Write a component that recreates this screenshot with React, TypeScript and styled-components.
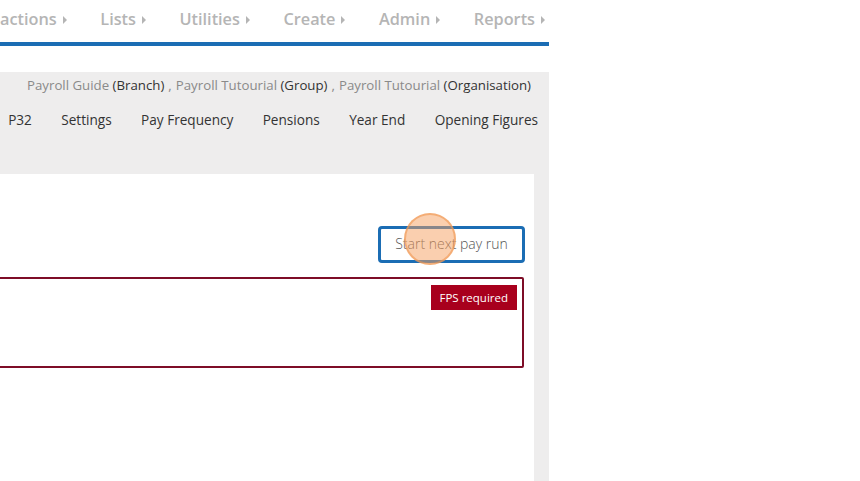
import React from "react";
import styled, { createGlobalStyle } from "styled-components";

const GlobalStyle = createGlobalStyle`
  html, body {
    margin: 0;
    padding: 0;
    background: #ffffff;
    font-family: "Open Sans", "Noto Sans", sans-serif;
  }
`;

const Page = styled.div`
  width: 549px;
  height: 481px;
  display: flex;
  flex-direction: column;
  overflow: hidden;
`;

const TopNav = styled.nav`
  height: 42px;
  display: flex;
  justify-content: flex-end;
  align-items: center;
  gap: 33.5px;
  padding-right: 4px;
  white-space: nowrap;
`;

const NavItem = styled.span`
  display: flex;
  align-items: center;
  gap: 6px;
  font-size: 16.3px;
  font-weight: 600;
  color: #b5b5b5;
  padding-bottom: 4px;
`;

const Caret = styled.span`
  width: 0;
  height: 0;
  border-top: 4px solid transparent;
  border-bottom: 4px solid transparent;
  border-left: 4px solid #b5b5b5;
  margin-top: 2px;
`;

const BlueBar = styled.div`
  height: 4px;
  background: #1b6db4;
`;

const Gap = styled.div<{ $h: number }>`
  height: ${(p) => p.$h}px;
  flex-shrink: 0;
`;

const GrayArea = styled.div`
  flex: 1;
  background: #eeeded;
  display: flex;
  flex-direction: column;
`;

const Breadcrumb = styled.div`
  height: 26px;
  display: flex;
  justify-content: flex-end;
  align-items: center;
  padding-right: 18px;
  font-size: 13.25px;
  color: #333333;
  white-space: nowrap;
`;

const Crumb = styled.span`
  color: #8a8a8a;
`;

const Sep = styled.span`
  color: #8a8a8a;
  margin: 0 4px;
`;

const Tabs = styled.div`
  height: 42px;
  display: flex;
  justify-content: flex-end;
  align-items: center;
  gap: 29.4px;
  padding-right: 11px;
  white-space: nowrap;
`;

const Tab = styled.span`
  font-size: 13.6px;
  color: #333333;
`;

const Panel = styled.div`
  flex: 1;
  margin-top: 34px;
  margin-right: 15px;
  background: #ffffff;
  display: flex;
  flex-direction: column;
  overflow: hidden;
`;

const ButtonRow = styled.div`
  display: flex;
  justify-content: flex-end;
  padding: 52px 9px 0 0;
`;

const ButtonWrap = styled.div`
  position: relative;
`;

const PayRunButton = styled.button`
  width: 147px;
  height: 37px;
  border: 3px solid #1b6db4;
  border-radius: 4px;
  background: #ffffff;
  font-family: "Open Sans", "Noto Sans", sans-serif;
  font-size: 14px;
  font-weight: 300;
  color: #555555;
  padding: 0 0 3px;
`;

const ClickMarker = styled.span`
  position: absolute;
  left: 26px;
  top: -13px;
  width: 52px;
  height: 52px;
  border-radius: 50%;
  background: rgba(245, 160, 95, 0.5);
  border: 2px solid rgba(240, 150, 80, 0.6);
  box-sizing: border-box;
  pointer-events: none;
`;

const Alert = styled.div`
  margin: 14px 10px 0 -10px;
  height: 91px;
  box-sizing: border-box;
  border: 2px solid #7e0d27;
  border-radius: 2px;
  display: flex;
  justify-content: flex-end;
  align-items: flex-start;
  padding: 6px 5px 0 0;
`;

const Badge = styled.span`
  background: #a8001d;
  color: #ffffff;
  font-size: 11.5px;
  height: 24px;
  padding: 0 9px 1px;
  display: flex;
  align-items: center;
`;

const navItems = ["Transactions", "Lists", "Utilities", "Create", "Admin", "Reports"];
const tabs = ["P32", "Settings", "Pay Frequency", "Pensions", "Year End", "Opening Figures"];

export default function App() {
  return (
    <>
      <GlobalStyle />
      <Page>
        <TopNav>
          {navItems.map((n) => (
            <NavItem key={n}>
              {n}
              <Caret />
            </NavItem>
          ))}
        </TopNav>
        <BlueBar />
        <Gap $h={26} />
        <GrayArea>
          <Breadcrumb>
            <Crumb>Payroll Guide</Crumb>&nbsp;(Branch)<Sep>,</Sep>
            <Crumb>Payroll Tutourial</Crumb>&nbsp;(Group)<Sep>,</Sep>
            <Crumb>Payroll Tutourial</Crumb>&nbsp;(Organisation)
          </Breadcrumb>
          <Tabs>
            {tabs.map((t) => (
              <Tab key={t}>{t}</Tab>
            ))}
          </Tabs>
          <Panel>
            <ButtonRow>
              <ButtonWrap>
                <PayRunButton>Start next pay run</PayRunButton>
                <ClickMarker />
              </ButtonWrap>
            </ButtonRow>
            <Alert>
              <Badge>FPS required</Badge>
            </Alert>
          </Panel>
        </GrayArea>
      </Page>
    </>
  );
}
